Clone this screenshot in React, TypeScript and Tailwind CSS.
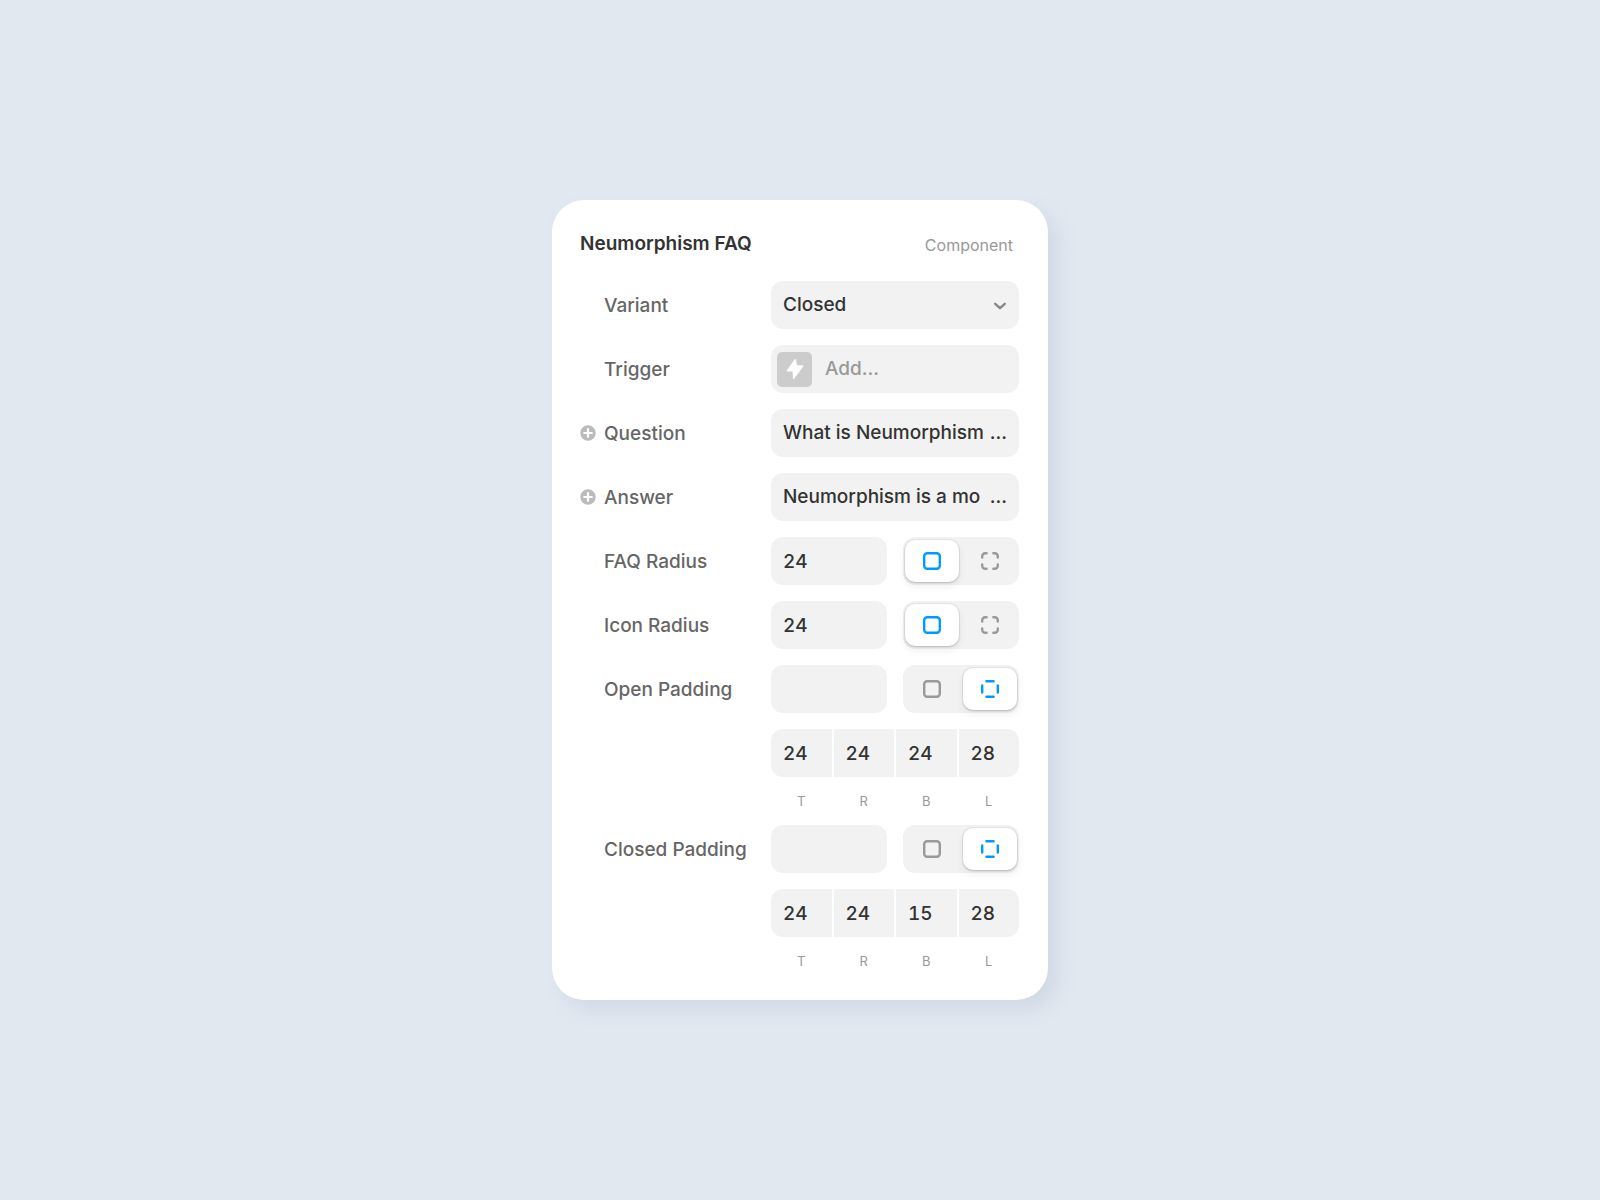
import { useId, useState } from 'react'
import type { ReactNode } from 'react'

type Mode = 'all' | 'each'

function Row({ label, htmlFor, expandable, children }: {
  label: string
  htmlFor: string
  expandable?: boolean
  children: ReactNode
}) {
  return (
    <div className="flex items-center justify-between">
      <div className="flex items-center gap-2">
        <div className="flex w-4">
          {expandable && (
            <button type="button" aria-label={`Add variable for ${label}`}>
              <PlusIcon />
            </button>
          )}
        </div>
        <label htmlFor={htmlFor} className="pt-0.5 text-[19px] leading-6 font-medium whitespace-nowrap text-[#666]">
          {label}
        </label>
      </div>
      <div className="flex w-[248px] shrink-0 gap-4">{children}</div>
    </div>
  )
}

function PlusIcon() {
  return (
    <svg width="16" height="16" viewBox="0 0 16 16" fill="none">
      <circle cx="8" cy="8" r="7.7" fill="#bbb" />
      <path d="M8 4.2v7.6M4.2 8h7.6" stroke="#fff" strokeWidth="2.2" strokeLinecap="round" />
    </svg>
  )
}

function SquareIcon() {
  return (
    <svg width="18" height="18" viewBox="0 0 18 18" fill="none" stroke="currentColor" strokeWidth="2.4">
      <rect x="1.2" y="1.2" width="15.6" height="15.6" rx="3" />
    </svg>
  )
}

function CornersIcon() {
  return (
    <svg width="18" height="18" viewBox="0 0 18 18" fill="none" stroke="currentColor" strokeWidth="2.4" strokeLinecap="round">
      <path d="M1.2 5.6V4.2a3 3 0 0 1 3-3h1.4M12.4 1.2h1.4a3 3 0 0 1 3 3v1.4M16.8 12.4v1.4a3 3 0 0 1-3 3h-1.4M5.6 16.8H4.2a3 3 0 0 1-3-3v-1.4" />
    </svg>
  )
}

function SidesIcon() {
  return (
    <svg width="18" height="18" viewBox="0 0 18 18" fill="none" stroke="currentColor" strokeWidth="2.4" strokeLinecap="round">
      <path d="M5.4 1.2h7.2M5.4 16.8h7.2M1.2 5.4v7.2M16.8 5.4v7.2" />
    </svg>
  )
}

function Segment({ name, label, checked, onSelect, children }: {
  name: string
  label: string
  checked: boolean
  onSelect: () => void
  children: ReactNode
}) {
  return (
    <label
      className={
        checked
          ? 'flex items-center justify-center rounded-[10px] bg-white text-[#0099ff] shadow-[0_0_0_1px_rgba(0,0,0,0.05),0_1px_2px_rgba(0,0,0,0.14),0_4px_8px_rgba(0,0,0,0.07)]'
          : 'flex items-center justify-center rounded-[10px] text-[#999]'
      }
    >
      <input type="radio" name={name} aria-label={label} checked={checked} onChange={onSelect} className="sr-only" />
      {children}
    </label>
  )
}

function NumberModeRow({ label, value, initialMode, eachIcon }: {
  label: string
  value: string
  initialMode: Mode
  eachIcon: ReactNode
}) {
  const id = useId()
  const [mode, setMode] = useState<Mode>(initialMode)

  return (
    <Row label={label} htmlFor={id}>
      <input
        id={id}
        defaultValue={value}
        className="h-12 w-[116px] rounded-xl bg-[#f2f2f2] px-3 text-[19px] font-medium tabular-nums text-[#333] outline-none"
      />
      <div className="relative grid h-12 w-[116px] grid-cols-2 gap-1 rounded-xl bg-[#f2f2f2] px-0.5 py-[3px]">
        <Segment name={`${id}-mode`} label={`${label} all`} checked={mode === 'all'} onSelect={() => setMode('all')}>
          <SquareIcon />
        </Segment>
        <Segment name={`${id}-mode`} label={`${label} individual`} checked={mode === 'each'} onSelect={() => setMode('each')}>
          {eachIcon}
        </Segment>
      </div>
    </Row>
  )
}

const SIDES = ['T', 'R', 'B', 'L']

function SidesInput({ name, values }: { name: string; values: string[] }) {
  const id = useId()

  return (
    <div className="grid w-[248px] grid-cols-4 gap-x-0.5 self-end">
      {SIDES.map((side, i) => (
        <div key={side} className="group flex flex-col gap-4">
          <input
            id={`${id}-${side}`}
            aria-label={`${name} ${side}`}
            defaultValue={values[i]}
            className="h-12 w-full bg-[#f2f2f2] pl-3 text-[19px] font-medium tabular-nums text-[#333] outline-none group-first:rounded-l-xl group-last:rounded-r-xl"
          />
          <label htmlFor={`${id}-${side}`} className="text-center text-[13px] leading-4 text-[#999]">
            {side}
          </label>
        </div>
      ))}
    </div>
  )
}

function TextRow({ label, value }: { label: string; value: string }) {
  const id = useId()

  return (
    <Row label={label} htmlFor={id} expandable>
      <div className="flex h-12 w-full items-center rounded-xl bg-[#f2f2f2] px-3 text-[19px] font-medium text-[#333]">
        <input id={id} defaultValue={value} className="w-full min-w-0 flex-1 outline-none" />
        <span>...</span>
      </div>
    </Row>
  )
}

export default function App() {
  return (
    <main className="flex min-h-screen items-center justify-center bg-[#e1e8f0] font-['Inter',sans-serif]">
      <section className="flex w-full max-w-[496px] flex-col gap-4 rounded-[32px] bg-white pt-8 pr-[29px] pb-[31px] pl-7 shadow-[10px_10px_20px_#d1d9e6]">
        <header className="mb-[9px] flex items-end justify-between pr-1.5">
          <h1 className="text-[19px] leading-6 font-semibold text-[#333]">Neumorphism FAQ</h1>
          <span className="text-[16px] leading-[22px] text-[#999]">Component</span>
        </header>

        <Row label="Variant" htmlFor="variant">
          <div className="relative w-full">
            <select
              id="variant"
              className="h-12 w-full appearance-none rounded-xl bg-[#f2f2f2] px-3 text-[19px] font-medium text-[#333] outline-none"
            >
              <option>Closed</option>
              <option>Open</option>
            </select>
            <svg
              className="pointer-events-none absolute top-5 right-3"
              width="14" height="10" viewBox="0 0 14 10" fill="none"
              stroke="#888" strokeWidth="2.4" strokeLinecap="round" strokeLinejoin="round"
            >
              <path d="M2.2 2.8 7 7.2l4.8-4.4" />
            </svg>
          </div>
        </Row>

        <Row label="Trigger" htmlFor="trigger">
          <button
            id="trigger"
            type="button"
            className="flex h-12 w-full items-center gap-[13px] rounded-xl bg-[#f2f2f2] pl-1.5 text-[19px] font-medium text-[#999]"
          >
            <span className="flex size-[35px] items-center justify-center rounded-[5px] bg-[#ccc]">
              <svg width="18" height="22" viewBox="0 0 18 22" fill="#fff" stroke="#fff" strokeWidth="1.4" strokeLinejoin="round">
                <path d="M9.2 1.6 1.4 12.8h5.8l.4 7.6 9-12.4h-6.2Z" />
              </svg>
            </span>
            Add...
          </button>
        </Row>

        <TextRow label="Question" value="What is Neumorphism" />
        <TextRow label="Answer" value="Neumorphism is a mo" />

        <NumberModeRow label="FAQ Radius" value="24" initialMode="all" eachIcon={<CornersIcon />} />
        <NumberModeRow label="Icon Radius" value="24" initialMode="all" eachIcon={<CornersIcon />} />

        <NumberModeRow label="Open Padding" value="" initialMode="each" eachIcon={<SidesIcon />} />
        <SidesInput name="Open Padding" values={['24', '24', '24', '28']} />

        <NumberModeRow label="Closed Padding" value="" initialMode="each" eachIcon={<SidesIcon />} />
        <SidesInput name="Closed Padding" values={['24', '24', '15', '28']} />
      </section>
    </main>
  )
}
